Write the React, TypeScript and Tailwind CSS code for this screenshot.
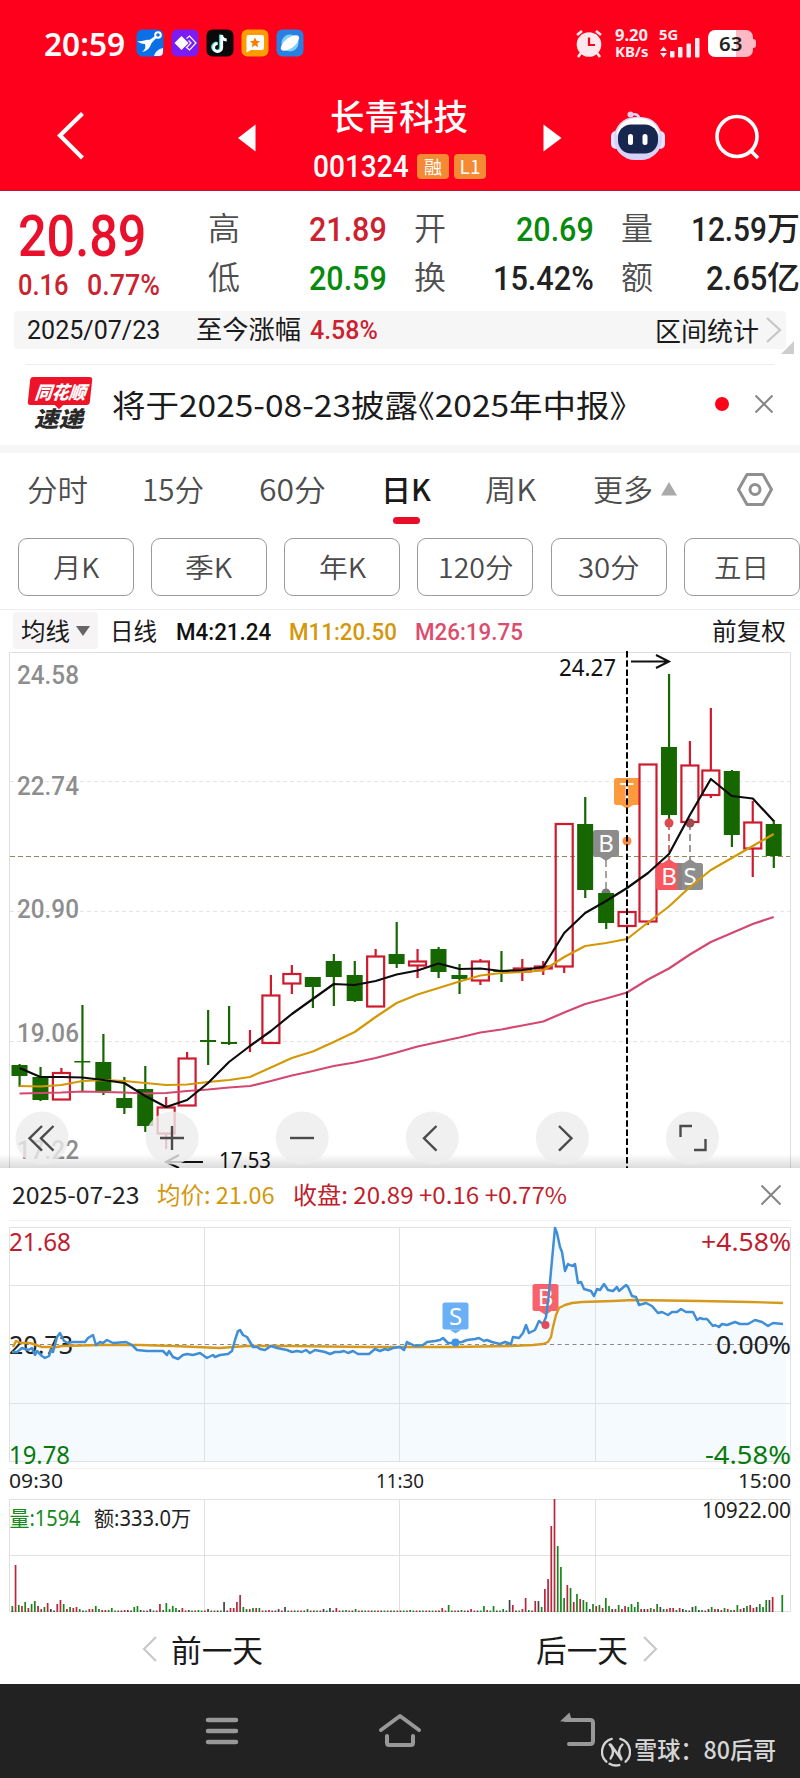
import React, { FC, ReactNode, useLayoutEffect, useRef, useState } from "react";

const DIN = "font-['Roboto',sans-serif]";

interface FitProps {
  w: number;
  className?: string;
  children: ReactNode;
}

// single line of text squeezed or stretched to a fixed width
const Fit: FC<FitProps> = ({ w, className = "", children }) => {
  const ref = useRef<HTMLSpanElement>(null);
  const [scale, setScale] = useState(1);
  useLayoutEffect(() => {
    if (ref.current) setScale(w / ref.current.offsetWidth);
  }, [w]);
  return (
    <span
      className={`inline-block shrink-0 whitespace-nowrap leading-none ${className}`}
      style={{ width: w }}
    >
      <span
        ref={ref}
        className="inline-block origin-left"
        style={{ transform: `scaleX(${scale})` }}
      >
        {children}
      </span>
    </span>
  );
};

interface LabelProps {
  x: number;
  y: number;
  w: number;
  size: number;
  fill: string;
  din?: boolean;
  children: ReactNode;
}

const Label: FC<LabelProps> = ({ x, y, w, size, fill, din, children }) => (
  <text
    x={x}
    y={y}
    textLength={w}
    lengthAdjust="spacingAndGlyphs"
    fontSize={size}
    fill={fill}
    className={
      din
        ? "font-['Roboto',sans-serif] font-medium"
        : "font-['Noto_Sans','Noto_Sans_CJK_SC',sans-serif]"
    }
  >
    {children}
  </text>
);

const StatusBar = () => (
  <div className="flex h-[86px] items-start pt-[29px] pl-[44px] text-white">
    <Fit
      w={81}
      className="mt-[-1px] font-['Noto_Sans'] text-[32px] font-semibold"
    >
      20:59
    </Fit>
    <div className="ml-[11px] flex gap-[7px]">
      <svg width="28" height="28" viewBox="0 0 28 28">
        <rect x=".5" y=".5" width="27" height="27" rx="6" fill="#0b6fe8" />
        <path
          d="M1 12c6 1 9-2 12-1 3-1 4-3 6-4l3 1c-3 2-5 4-7 7-1 4-4 7-9 8 3-2 4-5 3-8-3 0-6-1-8-3z"
          fill="#fff"
        />
        <circle cx="22" cy="6" r="2.8" fill="none" stroke="#fff" strokeWidth="2" />
        <path d="M18 27c1-4 4-7 9-8v4c0 3-2 4-4 4z" fill="#eaf3ff" />
      </svg>
      <svg width="28" height="28" viewBox="0 0 28 28">
        <rect x=".5" y=".5" width="27" height="27" rx="6" fill="#7b1cf5" />
        <path d="M10.500 7l7 7-7 7-7-7z" fill="#fff" />
        <path
          d="M15.500 9.500L18.500 7l6.500 7-6.500 7-3-2.500L20 14l-2.500-2.500"
          fill="none"
          stroke="#fff"
          strokeWidth="1.200"
        />
      </svg>
      <svg width="28" height="28" viewBox="0 0 28 28">
        <rect x=".5" y=".5" width="27" height="27" rx="6" fill="#0a0a0a" />
        <g fill="none" strokeWidth="2.800">
          <path
            d="M14.500 5.500v12.500a4 4 0 1 1-4-4M14.500 6c.5 3 2.500 4.500 5 4.500"
            stroke="#25e6e0"
          />
          <path
            d="M15.700 6v12.500a4 4 0 1 1-4-4M15.700 6.500c.5 3 2.500 4.500 5 4.500"
            stroke="#fff"
          />
        </g>
      </svg>
      <svg width="28" height="28" viewBox="0 0 28 28">
        <rect x=".5" y=".5" width="27" height="27" rx="6" fill="#ff9c00" />
        <path d="M7 6h14a2 2 0 0 1 2 2v11a2 2 0 0 1-2 2H10l-4.500 2.500V8A2 2 0 0 1 7 6z" fill="#fff" />
        <path
          d="M14 8.500l1.500 3.300 3.600.4-2.700 2.400.8 3.600-3.200-1.900-3.200 1.900.8-3.600-2.700-2.400 3.600-.4z"
          fill="#f57c00"
        />
      </svg>
      <svg width="28" height="28" viewBox="0 0 28 28">
        <rect x=".5" y=".5" width="27" height="27" rx="6" fill="#2a80e0" />
        <circle cx="14" cy="14" r="8.500" fill="#7fd0fb" />
        <ellipse
          cx="14"
          cy="14"
          rx="11"
          ry="5"
          fill="#fff"
          transform="rotate(-38 14 14)"
        />
      </svg>
    </div>
    <svg width="28" height="30" viewBox="0 0 28 30" className="ml-[271px]">
      <path
        d="M2 6l5-4M21 2l5 4M6 24l-3 4M22 24l3 4"
        stroke="#ffe9ec"
        strokeWidth="2.600"
      />
      <circle cx="14" cy="15.500" r="12.300" fill="#ffe9ec" />
      <path d="M14 8.500V16h6" fill="none" stroke="#ff001c" strokeWidth="2.200" />
    </svg>
    <div className="ml-[12px] flex w-[34px] flex-col font-['Noto_Sans'] font-bold text-[#ffeef0]">
      <Fit w={33} className="mt-[-1px] text-[15.5px]">
        9.20
      </Fit>
      <Fit w={33} className="mt-[1px] text-[14px]">
        KB/s
      </Fit>
    </div>
    <div className="ml-[10px] flex w-[42px] flex-col text-[#ffeef0]">
      <Fit w={19} className="mt-[-1px] font-['Noto_Sans'] text-[14px] font-bold">
        5G
      </Fit>
      <svg width="42" height="20" viewBox="0 0 42 20" className="mt-[-4px]">
        <g fill="#ffeef0">
          <path d="M1 13l3.500-4.500L8 13zM1 15h7l-3.500 4.500z" />
          <rect x="11" y="13" width="4.500" height="6.500" rx="1" />
          <rect x="19" y="9" width="4.500" height="10.500" rx="1" />
          <rect x="27.500" y="5.500" width="4.500" height="14" rx="1" />
          <rect x="36" y="0" width="4.500" height="19.500" rx="1" />
        </g>
      </svg>
    </div>
    <div className="relative ml-[7px] mt-px flex h-[27px] w-[45px] items-center justify-center rounded-[7px] bg-linear-to-r from-white from-62% to-[#ffb9c4] to-62% pr-px">
      <Fit
        w={23}
        className="font-['Noto_Sans'] text-[19.5px] font-semibold text-[#222]"
      >
        63
      </Fit>
      <div className="absolute top-[9px] -right-[3px] h-[9px] w-[3px] rounded-r bg-[#ffb9c4]" />
    </div>
  </div>
);

const TitleBar = () => (
  <div className="flex h-[104px] text-white">
    <svg width="30" height="50" viewBox="0 0 30 50" className="mt-[25px] ml-[55px]">
      <path d="M27.500 2.500L5 24.500 27.500 47" fill="none" stroke="#fff" strokeWidth="4.200" />
    </svg>
    <svg width="18" height="28" viewBox="0 0 18 28" className="mt-[38px] ml-[153px]">
      <path d="M17.500.5v27L0 14z" fill="#fff" />
    </svg>
    <div className="ml-[57px] w-[176px]">
      <Fit w={138} className="mt-[11px] ml-[17px] text-[35px] font-medium">
        长青科技
      </Fit>
      <div className="mt-[16px] flex items-center">
        <Fit w={96} className={`${DIN} text-[31px] font-medium`}>
          001324
        </Fit>
        <span className="ml-[8px] flex h-[25px] w-[32px] items-center justify-center rounded-sm bg-[#f68a34] pb-0.5 text-[18px] leading-none">
          融
        </span>
        <span className="ml-[5px] flex h-[25px] w-[32px] items-center justify-center rounded-sm bg-[#f68a34] pb-0.5 text-[19px] leading-none">
          L1
        </span>
      </div>
    </div>
    <svg width="20" height="28" viewBox="0 0 20 28" className="mt-[38px] ml-[54px]">
      <path d="M.5.5v27L18.500 14z" fill="#fff" />
    </svg>
    <svg width="56" height="52" viewBox="0 0 56 52" className="mt-[23px] ml-[47px]">
      <path d="M21 6c5-2 8 0 8.500 5" fill="none" stroke="#dcd8fa" strokeWidth="2.500" />
      <circle cx="20.500" cy="5.500" r="3" fill="#eec8e8" />
      <rect x="1" y="22" width="10" height="18" rx="5" fill="#e4e4ff" />
      <rect x="45" y="22" width="10" height="18" rx="5" fill="#e4e4ff" />
      <rect x="4" y="8" width="48" height="43" rx="21" fill="#d6d3f8" />
      <path d="M6 27c2-12 10-18 22-18s20 6 22 18c-5-8-12-11-22-11S11 19 6 27z" fill="#fff" />
      <rect x="8" y="15.500" width="40" height="29" rx="13" fill="#17264e" />
      <rect x="18" y="25" width="5" height="11" rx="2.500" fill="#fff" />
      <rect x="32.500" y="25" width="5" height="11" rx="2.500" fill="#fff" />
    </svg>
    <svg width="48" height="48" viewBox="0 0 48 48" className="mt-[28px] ml-[47px]">
      <g fill="none" stroke="#fff" strokeWidth="3.600">
        <circle cx="24" cy="22.500" r="20" />
        <path d="M37 36l8 8" />
      </g>
    </svg>
  </div>
);

const Quote = () => (
  <div className="flex h-[120px] overflow-hidden text-[#222]">
    <div className="flex w-[189px] flex-col pl-[18px]">
      <Fit
        w={128}
        className={`${DIN} mt-[17px] text-[57px] font-medium text-[#e9102c]`}
      >
        20.89
      </Fit>
      <div className={`${DIN} mt-[6px] flex text-[29px] font-medium text-[#cb2230]`}>
        <Fit w={51}>0.16</Fit>
        <Fit w={73} className="ml-[18px]">
          0.77%
        </Fit>
      </div>
    </div>
    <div className="flex w-[220px] flex-col pl-[19px] font-[350] text-[#4e4e4e]">
      <div className="mt-[19px] flex text-[32px] leading-none">
        高
        <Fit w={78} className={`${DIN} mt-[2px] ml-[69px] text-[34px] font-medium text-[#cb2230]`}>
          21.89
        </Fit>
      </div>
      <div className="mt-[13px] flex text-[32px] leading-none">
        低
        <Fit w={78} className={`${DIN} mt-[2px] ml-[69px] text-[34px] font-medium text-[#078a0d]`}>
          20.59
        </Fit>
      </div>
    </div>
    <div className="flex w-[205px] flex-col pl-[5px] font-[350] text-[#4e4e4e]">
      <div className="mt-[19px] flex justify-between pr-[20px] text-[32px] leading-none">
        开
        <Fit w={78} className={`${DIN} mt-[2px] text-[34px] font-medium text-[#078a0d]`}>
          20.69
        </Fit>
      </div>
      <div className="mt-[13px] flex justify-between pr-[20px] text-[32px] leading-none">
        换
        <Fit w={101} className={`${DIN} mt-[2px] text-[34px] font-medium text-[#222]`}>
          15.42%
        </Fit>
      </div>
    </div>
    <div className="flex w-[186px] flex-col pl-[7px] font-[350] text-[#4e4e4e]">
      <div className="mt-[19px] flex justify-between text-[32px] leading-none">
        量
        <span className="flex font-medium text-[#222]">
          <Fit w={76} className={`${DIN} mt-[2px] text-[34px]`}>
            12.59
          </Fit>
          <Fit w={33} className="text-[32px]">
            万
          </Fit>
        </span>
      </div>
      <div className="mt-[13px] flex justify-between text-[32px] leading-none">
        额
        <span className="flex font-medium text-[#222]">
          <Fit w={61} className={`${DIN} mt-[2px] text-[34px]`}>
            2.65
          </Fit>
          <Fit w={33} className="text-[32px]">
            亿
          </Fit>
        </span>
      </div>
    </div>
  </div>
);

const RangeBar = () => (
  <div className="relative mx-[14px] flex h-[38px] items-start rounded bg-[#f6f6f6] pl-[13px] text-[26px] text-[#1a1a1a]">
    <Fit w={133} className={`${DIN} mt-[6px]`}>
      2025/07/23
    </Fit>
    <Fit w={105} className="mt-[4px] ml-[36px]">
      至今涨幅
    </Fit>
    <Fit w={68} className={`${DIN} mt-[6px] ml-[9px] font-medium text-[#cb2230]`}>
      4.58%
    </Fit>
    <Fit w={104} className="mt-[6px] ml-[277px]">
      区间统计
    </Fit>
    <svg width="18" height="28" viewBox="0 0 18 28" className="mt-[5px] ml-[6px]">
      <path d="M2 2l13 12L2 26" fill="none" stroke="#c6c6c6" strokeWidth="2.200" />
    </svg>
    <svg
      width="13"
      height="13"
      viewBox="0 0 13 13"
      className="absolute -right-[8px] -bottom-[5px]"
    >
      <path d="M13 0v13H0z" fill="#cdcdcd" />
    </svg>
  </div>
);

const News = () => (
  <div className="flex h-[80px]">
    <div className="mt-[12px] ml-[27px] w-[66px]">
      <div className="relative h-[29px]">
        <div className="mx-[2px] flex h-[28px] -skew-x-6 items-center justify-center rounded-[3px] bg-[#ee1328]">
          <Fit w={51} className="text-[18px] font-black text-white italic">
            同花顺
          </Fit>
        </div>
        <div className="absolute -bottom-[2px] left-[29px] size-[6px] rotate-45 bg-[#ee1328]" />
      </div>
      <Fit w={49} className="ml-[7px] text-[22px] font-black text-[#2a2a2a] italic">
        速递
      </Fit>
    </div>
    <Fit
      w={514}
      className="mt-[24px] ml-[19px] text-[30.5px] text-[#1b1b1b] [font-feature-settings:'halt']"
    >
      将于2025-08-23披露《2025年中报》
    </Fit>
    <div className="mt-[32px] ml-[89px] size-[14px] rounded-full bg-[#fb0318]" />
    <svg width="20" height="20" viewBox="0 0 20 20" className="mt-[29px] ml-[25px]">
      <path d="M1.500 1.500l17 17M18.500 1.500l-17 17" stroke="#868686" strokeWidth="2" />
    </svg>
  </div>
);

const Tabs = () => (
  <div className="flex h-[85px] pt-[20px] text-[30px] font-[350] text-[#4e4e4e]">
    <Fit w={61} className="ml-[27px]">
      分时
    </Fit>
    <Fit w={62} className="ml-[54px]">
      15分
    </Fit>
    <Fit w={67} className="ml-[55px]">
      60分
    </Fit>
    <div className="ml-[55px] flex w-[50px] flex-col items-center">
      <Fit w={50} className="font-medium text-[#1a1a1a]">
        日K
      </Fit>
      <div className="mt-[14px] h-[7px] w-[27px] rounded-full bg-[#e90d2a]" />
    </div>
    <Fit w={51} className="ml-[54px]">
      周K
    </Fit>
    <Fit w={60} className="ml-[57px]">
      更多
    </Fit>
    <svg width="18" height="14" viewBox="0 0 18 14" className="mt-[9px] ml-[7px]">
      <path d="M9 0l8 13.500H1z" fill="#aaa" />
    </svg>
    <svg width="38" height="36" viewBox="0 0 38 36" className="ml-[58px] -mt-[1px]">
      <g fill="none" stroke="#8f8f8f" strokeWidth="3" strokeLinejoin="round">
        <path d="M11 2.500h16L35.500 17.500 27 32.500H11L2.500 17.500z" />
        <circle cx="19" cy="17.500" r="5" />
      </g>
    </svg>
  </div>
);

const periods = [
  { name: "月K", w: 46 },
  { name: "季K", w: 47 },
  { name: "年K", w: 47 },
  { name: "120分", w: 75 },
  { name: "30分", w: 62 },
  { name: "五日", w: 55 },
];

const Periods = () => (
  <div className="flex h-[72px] gap-[17.250px] border-b border-[#ececec] pl-[17.500px]">
    {periods.map(({ name, w }) => (
      <div
        key={name}
        className="flex h-[58px] w-[116px] shrink-0 items-center justify-center rounded-[9px] border border-[#9a9a9a] pb-px text-[27px] font-[350] text-[#4a4a4a]"
      >
        <Fit w={w}>{name}</Fit>
      </div>
    ))}
  </div>
);

const Averages = () => (
  <div className="flex h-[41px] items-start pt-[2px] text-[24px] text-[#1a1a1a]">
    <div className="ml-[13px] flex h-[37px] w-[85px] rounded bg-[#f6f4f5] pt-[6px] pl-[8px]">
      <Fit w={49}>均线</Fit>
      <svg width="16" height="11" viewBox="0 0 16 11" className="mt-[8px] ml-[5px]">
        <path d="M1 0h14L8 10z" fill="#666" />
      </svg>
    </div>
    <Fit w={47} className="mt-[6px] ml-[12px]">
      日线
    </Fit>
    <Fit w={95} className={`${DIN} mt-[8px] ml-[19px] font-medium text-[#111]`}>
      M4:21.24
    </Fit>
    <Fit w={108} className={`${DIN} mt-[8px] ml-[18px] font-medium text-[#d4970c]`}>
      M11:20.50
    </Fit>
    <Fit w={108} className={`${DIN} mt-[8px] ml-[18px] font-medium text-[#dc4c6c]`}>
      M26:19.75
    </Fit>
    <Fit w={74} className="mt-[6px] ml-[189px]">
      前复权
    </Fit>
  </div>
);

// high, body top, body bottom, low, rising
type Candle = [number, number, number, number, 0 | 1];

const candles: Candle[] = [
  [1064, 1065, 1076, 1087, 0],
  [1067, 1077, 1100, 1101, 0],
  [1068, 1073, 1099.5, 1099, 1],
  [1005, 1061, 1062.5, 1091, 0],
  [1034, 1062, 1091, 1095, 0],
  [1077, 1098, 1108, 1114, 0],
  [1066, 1089, 1126, 1132, 0],
  [1097, 1107.5, 1133.5, 1149, 1],
  [1052, 1058.5, 1105.5, 1105, 1],
  [1010, 1040, 1042, 1065, 0],
  [1006, 1042, 1044, 1045, 0],
  [1030, 1042, 1042, 1052, 1],
  [975, 995.5, 1043, 1043, 1],
  [965, 974, 983.5, 994, 1],
  [977, 977, 987, 1008, 0],
  [954, 961, 977, 1006, 0],
  [961, 975, 1001, 1002, 0],
  [949, 956.5, 1006.5, 1006, 1],
  [922, 954, 964, 968, 0],
  [949, 961.5, 965.5, 978, 1],
  [947, 949, 972, 978, 0],
  [964, 975, 979, 994, 0],
  [959, 961.5, 980.5, 985, 1],
  [951, 970, 972, 982, 0],
  [959, 968.5, 971.5, 981, 1],
  [961, 966.5, 968.5, 975, 1],
  [824, 824, 966.5, 973, 1],
  [797, 824, 890, 898, 0],
  [893, 893, 923, 929, 0],
  [912, 912, 926, 926, 1],
  [764, 764.5, 921.5, 925, 1],
  [674, 747, 815, 822, 0],
  [741, 765.5, 822, 822, 1],
  [708, 770.5, 795, 798, 1],
  [770, 771, 835, 847, 0],
  [801, 822.5, 848.5, 877, 1],
  [820, 824, 856, 868, 0],
];

const ma4 = [
  1068, 1077, 1077, 1077.5, 1080, 1083, 1096, 1107, 1100, 1083, 1062, 1046,
  1031, 1014, 999, 984, 985, 981, 974.5, 970.5, 963.5, 969, 968.5, 971, 970,
  967, 933, 913, 901, 888, 873, 854, 815, 779, 796, 798.5, 821,
];
const ma11 = [
  1086, 1086.5, 1085, 1081, 1080, 1081, 1083, 1085, 1084.5, 1082, 1080, 1077,
  1067.5, 1058, 1051.5, 1042, 1032, 1017, 1003, 994.5, 988, 981.5, 975.5, 973,
  972, 970.5, 957, 946, 943, 939, 922.5, 906.5, 887, 870, 858, 846, 834,
];
const ma26 = [
  1093.5, 1093, 1092.5, 1091.5, 1092, 1092.5, 1093.5, 1093, 1091, 1089.5,
  1087.5, 1086, 1081, 1075.5, 1071, 1066, 1062.5, 1058, 1052.5, 1046.5, 1042,
  1037.5, 1032.5, 1029.5, 1025.5, 1021.5, 1012.5, 1004, 998.5, 992.5, 979.5,
  968.5, 954.5, 942, 933, 924, 917,
];

const candleX = (i: number) => 19.5 + i * 20.95;
const line = (ys: number[]) => ys.map((y, i) => `${candleX(i)},${y}`).join(" ");

interface FlagProps {
  x: number;
  y: number;
  fill: string;
  up?: boolean;
  children: string;
}

const Flag: FC<FlagProps> = ({ x, y, fill, up, children }) => (
  <g>
    <rect x={x - 13} y={y} width="26" height="27" rx="2.500" fill={fill} />
    <path
      d={up ? `M${x - 6} ${y}l6-4 6 4z` : `M${x - 6} ${y + 27}l6 4 6-4z`}
      fill={fill}
    />
    <text
      x={x}
      y={y + 22}
      textAnchor="middle"
      fontSize="24"
      fill="#fff"
      className="font-['Noto_Sans']"
    >
      {children}
    </text>
  </g>
);

const tools = [
  <path d="M42 1126l-12.500 12.300 12.500 12.300M53.500 1126L41 1138.300l12.500 12.300" />,
  <path d="M160 1138h24M172 1126v24" />,
  <path d="M290 1138h24" />,
  <path d="M436.500 1126L424 1138.300l12.500 12.300" />,
  <path d="M559 1126l12.500 12.300-12.500 12.300" />,
  <path d="M680.500 1137v-11H692M694 1150h11.500v-11" />,
];

const DayChart = () => (
  <svg width="800" height="517" viewBox="0 651 800 517" className="block">
    <defs>
      <linearGradient id="edge" x1="0" y1="0" x2="0" y2="1">
        <stop offset="0" stopColor="#000" stopOpacity="0" />
        <stop offset="1" stopColor="#000" stopOpacity=".14" />
      </linearGradient>
    </defs>
    <path d="M9.500 1168V652.500h781V1168" fill="none" stroke="#dedede" />
    <path
      d="M10 781.500h780M10 911.500h780M10 1041.500h780"
      stroke="#e4e4e4"
      strokeDasharray="4 3"
    />
    <path d="M10 856.500h780" stroke="#8d8a55" strokeDasharray="5 3" />
    <Label x={17} y={684} w={62} size={25} fill="#8e8e8e" din>
      24.58
    </Label>
    <Label x={17} y={795} w={62} size={25} fill="#8e8e8e" din>
      22.74
    </Label>
    <Label x={17} y={918} w={62} size={25} fill="#8e8e8e" din>
      20.90
    </Label>
    <Label x={17} y={1041.500} w={62} size={25} fill="#8e8e8e" din>
      19.06
    </Label>
    <Label x={17} y={1159} w={62} size={25} fill="#8e8e8e" din>
      17.22
    </Label>

    <Flag x={627} y={778} fill="#fd9a3d">
      T
    </Flag>
    <path d="M627 845v66" stroke="#d9384a" strokeDasharray="6 3" />
    <circle cx="627" cy="841" r="4.500" fill="#f98a45" />
    <circle cx="606" cy="893" r="4.500" fill="#777" />
    <path d="M606 860v32" stroke="#888" strokeWidth="1.500" strokeDasharray="7 4" />
    <Flag x={606} y={830} fill="#8c8c8c">
      B
    </Flag>

    {candles.map(([high, top, bottom, low, up], i) => {
      const x = candleX(i);
      return up ? (
        <g key={i} fill="none" stroke="#cf1a2e" strokeWidth="2.200">
          <path d={`M${x} ${high}V${top}M${x} ${bottom}V${low}`} />
          <rect x={x - 8.500} y={top} width="17" height={bottom - top} />
        </g>
      ) : (
        <g key={i} fill="#176700">
          <rect x={x - 1} y={high} width="2.200" height={low - high} />
          <rect x={x - 8} y={top} width="16" height={bottom - top} />
        </g>
      );
    })}

    <path d="M669 823v37" stroke="#c4444c" strokeWidth="1.500" strokeDasharray="7 4" />
    <path d="M690 823v37" stroke="#777" strokeWidth="1.500" strokeDasharray="7 4" />
    <circle cx="669" cy="823" r="4.500" fill="#dc4a50" />
    <circle cx="690" cy="823" r="4.500" fill="#a04a50" />
    <Flag x={669} y={863} fill="#f9565f" up>
      B
    </Flag>
    <g opacity=".92">
      <Flag x={690} y={863} fill="#858585" up>
        S
      </Flag>
    </g>

    <g fill="none" strokeWidth="2.200" strokeLinejoin="round">
      <polyline points={line(ma26)} stroke="#d3486f" />
      <polyline points={line(ma11)} stroke="#d39806" />
      <polyline points={line(ma4)} stroke="#0c0c0c" />
    </g>
    <path d="M627 651v517" stroke="#000" strokeWidth="2" strokeDasharray="6.500 2.700" />

    <Label x={559} y={675.500} w={57} size={23} fill="#111">
      24.27
    </Label>
    <Label x={219} y={1168} w={52} size={22.500} fill="#111">
      17.53
    </Label>
    <g fill="none" stroke="#111" strokeWidth="2">
      <path d="M631 661.500h37M656 655l13 6.500-13 6.500" />
      <path d="M203 1162h-36M179 1155l-13 7 13 6" />
    </g>

    <rect x="0" y="1154" width="800" height="14" fill="url(#edge)" />
    {tools.map((icon, i) => (
      <g key={i}>
        <circle cx={42 + i * 130.100} cy="1138" r="26.500" fill="#ececec" opacity=".8" />
        <g fill="none" stroke="#4b4b4b" strokeWidth="2.400">
          {icon}
        </g>
      </g>
    ))}
  </svg>
);

const price =
  "12,1352 17,1352 22,1348 28,1350 32,1348 35,1355 37,1351 42,1356 45,1358 49,1356 51,1350 53,1352 57,1337 60,1333 64,1341 68,1343 72,1342 85,1342 88,1338 93,1335 96,1345 100,1342 103,1343 107,1340 113,1343 126,1342 132,1345 137,1350 147,1351 163,1351 167,1355 169,1351 173,1357 178,1359 183,1355 187,1354 193,1355 200,1353 207,1358 213,1355 215,1357 220,1355 228,1354 232,1351 235,1340 238,1331 240,1330 243,1335 247,1337 253,1347 257,1347 260,1349 265,1350 271,1346 277,1348 287,1350 292,1352 297,1351 302,1352 306,1350 310,1353 315,1350 325,1352 330,1354 335,1352 340,1352 344,1351 348,1353 353,1351 358,1354 369,1354 375,1349 380,1351 385,1349 388,1350 393,1348 400,1347 404,1350 407,1342 415,1346 423,1345 427,1342 435,1341 440,1340 443,1338 448,1343 453,1343 462,1342 467,1340 475,1339 479,1338 484,1341 487,1340 492,1342 500,1344 505,1342 511,1344 513,1337 519,1338 523,1333 526,1325 529,1333 535,1330 539,1321 543,1324 546,1317 549,1293 552,1260 555,1228 557,1233 560,1247 562,1252 565,1271 568,1264 572,1266 575,1264 578,1283 581,1282 584,1289 591,1291 594,1296 597,1289 600,1290 604,1284 608,1290 613,1291 617,1287 619,1291 626,1285 628,1287 632,1296 636,1297 639,1305 646,1303 652,1306 658,1313 662,1312 668,1315 672,1312 677,1312 681,1309 686,1312 693,1312 697,1320 700,1318 703,1319 707,1319 713,1326 715,1325 719,1327 722,1324 727,1325 735,1322 740,1324 748,1324 755,1320 762,1322 768,1326 773,1323 783,1324";
const average =
  "13,1347 16,1341 21,1343 30,1343 42,1347 57,1347 62,1346 100,1345 140,1345 173,1346 220,1348 247,1346 287,1346 367,1347 400,1347 453,1347 511,1346 533,1345 543,1344 548,1342 551,1337 553,1327 556,1315 559,1308 565,1305 572,1303 582,1302 613,1301 633,1300 700,1301 750,1302 783,1303";

const MinuteChart = () => (
  <svg width="800" height="280" viewBox="0 1216 800 280" className="block">
    <path d="M9 1220.500h782M9 1468.500h782" stroke="#f3f3f3" />
    <polygon points={`${price} 786,1324 786,1461 10,1461 10,1352`} fill="#f5fafe" />
    <path
      d="M9.500 1227.500h781v234H9.500zM9.500 1285.500h781M9.500 1403.500h781M204.500 1227.500v234M399.500 1227.500v234M595.500 1227.500v234"
      fill="none"
      stroke="#dfe2e5"
    />
    <path d="M10 1344.500h780" stroke="#8a8a8a" strokeDasharray="4 3.500" />
    <Label x={9} y={1251} w={62} size={25.500} fill="#be1e30">
      21.68
    </Label>
    <Label x={9} y={1354} w={64} size={25.500} fill="#222">
      20.73
    </Label>
    <Label x={9} y={1464} w={61} size={25.500} fill="#087a0c">
      19.78
    </Label>
    <Label x={701} y={1251} w={90} size={25.500} fill="#be1e30">
      +4.58%
    </Label>
    <Label x={716} y={1354} w={75} size={25.500} fill="#222">
      0.00%
    </Label>
    <Label x={705} y={1464} w={86} size={25.500} fill="#087a0c">
      -4.58%
    </Label>
    <g opacity=".9">
      <Flag x={455.500} y={1302.500} fill="#5ba8f6">
        S
      </Flag>
      <Flag x={545.500} y={1284} fill="#f9525c">
        B
      </Flag>
    </g>
    <g fill="none" strokeLinejoin="round">
      <polyline points={average} stroke="#d6991c" strokeWidth="2.400" />
      <polyline points={price} stroke="#408fd6" strokeWidth="2.500" />
    </g>
    <circle cx="455.500" cy="1342.500" r="4" fill="#3b93e8" />
    <circle cx="545.500" cy="1325" r="4" fill="#e04a5c" />
    <Label x={9} y={1487.500} w={54} size={20.500} fill="#222">
      09:30
    </Label>
    <Label x={376} y={1487.500} w={48} size={20.500} fill="#222">
      11:30
    </Label>
    <Label x={738} y={1487.500} w={53} size={20.500} fill="#222">
      15:00
    </Label>
  </svg>
);

// slot:height plus colour letter, quiet minutes are left out
const volumes =
  "0:6g 1:47r 2:7g 3:6r 4:10g 5:4r 6:8g 7:11g 8:6r 9:3r 10:5g 11:9r 12:3k 14:8r 15:12r 16:8g 17:3r 18:5g 19:4r 20:5r 21:3g 24:3r 25:3r 26:6g 27:3g 28:2r 29:2r 30:2g 31:4g 35:2r 36:2k 38:5g 39:6g 40:2k 43:3k 46:8r 47:2g 48:9g 49:3g 50:6g 51:4g 52:2k 53:4r 55:2k 58:2g 61:3k 66:10k 68:4r 69:4r 70:10r 71:17r 72:5g 73:3g 74:3r 75:4g 76:4r 77:4g 80:2r 83:3k 85:5k 92:3g 97:3k 99:4k 101:4r 104:2g 107:3g 124:2g 134:4r 136:7g 140:2g 143:3r 147:6g 148:2r 150:6g 153:3g 155:12k 156:7r 159:3r 160:14r 161:2g 163:11r 164:11k 165:5g 166:23r 167:33r 168:86r 169:113r 170:66g 171:45g 172:14g 173:27r 174:24g 175:10r 176:18g 177:13r 178:12g 179:10g 180:3k 181:8g 182:6r 183:7g 184:4r 185:14g 186:6g 187:3k 188:3r 189:7g 190:3r 191:6r 192:5g 193:8g 194:5g 195:10g 196:3r 197:3k 198:3r 199:4g 200:3r 201:8g 202:5k 203:3g 204:3r 205:4r 206:4r 207:2g 208:4r 209:3k 210:2g 212:5k 213:6g 214:2k 215:2g 217:3k 218:5g 219:3r 220:3k 221:2r 222:4g 223:3r 224:2g 225:2r 226:7g 227:3r 228:4k 229:6g 230:7r 231:4r 232:5k 233:8g 234:5g 235:12g 236:12k 237:15r 240:17g";
const barColors: Record<string, string> = {
  r: "#b8263a",
  g: "#16861c",
  k: "#444444",
};
const bars = Array.from({ length: 238 }, (_, i) => ({
  i,
  h: 1.5,
  c: "rkg"[i % 3],
})).filter(({ i }) => !volumes.includes(` ${i}:`));
volumes.split(" ").forEach((v) => {
  const [i, rest] = v.split(":");
  bars.push({ i: +i, h: parseInt(rest), c: rest.slice(-1) });
});

const VolumeChart = () => (
  <svg width="800" height="120" viewBox="0 1496 800 120" className="block">
    <path
      d="M9.500 1499.500h781v112H9.500zM9.500 1555.500h781M204.500 1499.500v112M399.500 1499.500v112M595.500 1499.500v112"
      fill="none"
      stroke="#e0e0e0"
    />
    {bars.map(({ i, h, c }) => (
      <rect
        key={i}
        x={11.500 + i * 3.208}
        y={1612 - h}
        width="1.700"
        height={h}
        fill={barColors[c]}
      />
    ))}
    <Label x={9.500} y={1525.500} w={71} size={21} fill="#168a1c">
      量:1594
    </Label>
    <Label x={94} y={1525.500} w={97} size={21} fill="#222">
      额:333.0万
    </Label>
    <Label x={702} y={1518} w={89} size={21} fill="#222">
      10922.00
    </Label>
  </svg>
);

const DayPanel = () => (
  <div className="h-[516px]">
    <div className="flex h-[48px] items-start pt-[15px] text-[23.5px] text-[#222]">
      <Fit w={128} className="ml-[12px]">
        2025-07-23
      </Fit>
      <Fit w={118} className="ml-[17px] text-[#d4970c]">
        均价: 21.06
      </Fit>
      <Fit w={274} className="ml-[18px] text-[#c01f2e]">
        收盘: 20.89 +0.16 +0.77%
      </Fit>
      <svg width="22" height="22" viewBox="0 0 22 22" className="mt-[1px] ml-[193px]">
        <path d="M1.500 1.500l19 19M20.500 1.500l-19 19" stroke="#868686" strokeWidth="2" />
      </svg>
    </div>
    <MinuteChart />
    <VolumeChart />
    <div className="flex items-start pt-[17px] text-[31px] text-[#1a1a1a]">
      <svg width="16" height="28" viewBox="0 0 16 28" className="ml-[142px] mt-[2px]">
        <path d="M14 2L2 14l12 12" fill="none" stroke="#c8c8c8" strokeWidth="2.200" />
      </svg>
      <Fit w={92} className="ml-[13px]">
        前一天
      </Fit>
      <Fit w={92} className="ml-[273px]">
        后一天
      </Fit>
      <svg width="16" height="28" viewBox="0 0 16 28" className="ml-[14px] mt-[2px]">
        <path d="M2 2l12 12L2 26" fill="none" stroke="#c8c8c8" strokeWidth="2.200" />
      </svg>
    </div>
  </div>
);

const NavBar = () => (
  <div className="flex h-[94px] bg-[#222]">
    <svg width="34" height="30" viewBox="0 0 34 30" className="mt-[32px] ml-[205px]">
      <path
        d="M3 4h28M3 15h28M3 26h28"
        stroke="#989898"
        strokeWidth="4.500"
        strokeLinecap="round"
      />
    </svg>
    <svg width="44" height="36" viewBox="0 0 44 36" className="mt-[28px] ml-[139px]">
      <g
        fill="none"
        stroke="#989898"
        strokeWidth="4"
        strokeLinecap="round"
        strokeLinejoin="round"
      >
        <path d="M3 18L22 4l19 14M9 24v7q0 2 2 2h22q2 0 2-2v-7" />
      </g>
    </svg>
    <svg width="38" height="36" viewBox="0 0 38 36" className="mt-[27px] ml-[137px]">
      <path
        d="M10 33h21q3 0 3-3V12q0-3-3-3H6"
        fill="none"
        stroke="#989898"
        strokeWidth="4"
        strokeLinecap="round"
      />
      <path d="M1 10.500L10.500 1.500 13 10z" fill="#989898" />
    </svg>
    <svg width="30" height="30" viewBox="0 0 28 28" className="mt-[53px] ml-[4px]">
      <g fill="none" stroke="#d4d4d4" strokeLinecap="round">
        <path d="M10 1.800A12.500 12.500 0 0 0 5 23M8 25a12.500 12.500 0 0 0 9 1.200M18 1.800A12.500 12.500 0 0 1 23 23M20 25" strokeWidth="2.200" />
        <path d="M8 7q6 6 1 13M20 7q-6 6-1 13M9 7l10 14" strokeWidth="2.200" />
      </g>
    </svg>
    <Fit w={142} className="mt-[54px] ml-[3px] text-[23.5px] font-medium text-[#d6d6d6]">
      雪球：80后哥
    </Fit>
  </div>
);

const App = () => {
  return (
    <div className="w-[800px] overflow-hidden bg-white font-['Noto_Sans_CJK_SC',sans-serif]">
      <div className="border-b border-[#b31c30] bg-[#ff001c]">
        <StatusBar />
        <TitleBar />
      </div>
      <Quote />
      <RangeBar />
      <div className="mx-[26px] mt-[15px] h-px bg-[#eee]" />
      <News />
      <div className="h-[8px] bg-[#f6f6f6]" />
      <Tabs />
      <Periods />
      <Averages />
      <DayChart />
      <DayPanel />
      <NavBar />
    </div>
  );
};

export default App;
